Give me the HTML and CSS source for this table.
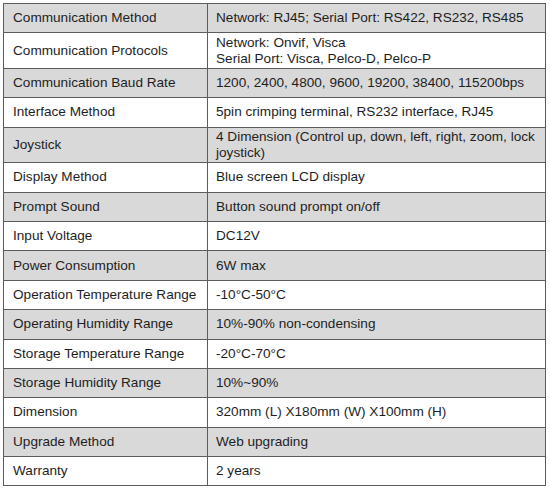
FILE: index.html
```html
<!DOCTYPE html>
<html>
<head>
<meta charset="utf-8">
<link rel="stylesheet" href="styles.css">
</head>
<body>
<div class="wrap">
<table class="spec">
  <colgroup><col class="c1"><col class="c2"></colgroup>
  <tr class="g"><td>Communication Method</td><td>Network: RJ45; Serial Port: RS422, RS232, RS485</td></tr>
  <tr class="w tall"><td>Communication Protocols</td><td>Network: Onvif, Visca<br>Serial Port: Visca, Pelco-D, Pelco-P</td></tr>
  <tr class="g"><td>Communication Baud Rate</td><td>1200, 2400, 4800, 9600, 19200, 38400, 115200bps</td></tr>
  <tr class="w"><td>Interface Method</td><td>5pin crimping terminal, RS232 interface, RJ45</td></tr>
  <tr class="g tall"><td>Joystick</td><td>4 Dimension (Control up, down, left, right, zoom, lock<br>joystick)</td></tr>
  <tr class="w"><td>Display Method</td><td>Blue screen LCD display</td></tr>
  <tr class="g"><td>Prompt Sound</td><td>Button sound prompt on/off</td></tr>
  <tr class="w"><td>Input Voltage</td><td>DC12V</td></tr>
  <tr class="g"><td>Power Consumption</td><td>6W max</td></tr>
  <tr class="w"><td>Operation Temperature Range</td><td>-10°C-50°C</td></tr>
  <tr class="g"><td>Operating Humidity Range</td><td>10%-90% non-condensing</td></tr>
  <tr class="w"><td>Storage Temperature Range</td><td>-20°C-70°C</td></tr>
  <tr class="g"><td>Storage Humidity Range</td><td>10%~90%</td></tr>
  <tr class="w"><td>Dimension</td><td>320mm (L) X180mm (W) X100mm (H)</td></tr>
  <tr class="g"><td>Upgrade Method</td><td>Web upgrading</td></tr>
  <tr class="w"><td>Warranty</td><td>2 years</td></tr>
</table>
</div>
</body>
</html>
```
FILE: styles.css
```css
html, body {
  margin: 0;
  padding: 0;
  background: #ffffff;
}
.wrap {
  padding: 3px 0 0 3px;
}
.spec {
  border-collapse: collapse;
  width: 542px;
  table-layout: fixed;
  font-family: "Liberation Sans", Arial, sans-serif;
  font-size: 13.6px;
  color: #1e1e1e;
}
.c1 { width: 204px; }
.c2 { width: 338px; }
.spec td {
  border: 1px solid #5c5c5c;
  padding: 0 4px 0 9px;
  height: 29.4px;
  line-height: 16px;
  vertical-align: middle;
  box-sizing: border-box;
  white-space: nowrap;
}
.spec td + td {
  padding-left: 8px;
}
.spec tr.tall td {
  height: 35.5px;
}
.g td { background: #d9d9d9; }
.w td { background: #ffffff; }
```
